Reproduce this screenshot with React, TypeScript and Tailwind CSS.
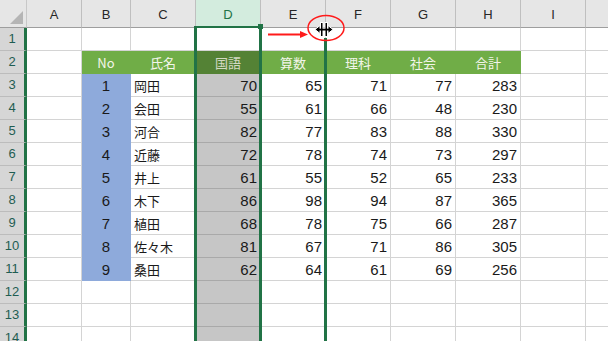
import React from "react";

const COLS = ["A", "B", "C", "D", "E", "F", "G", "H", "I", "J"];
const HEAD = ["No", "氏名", "国語", "算数", "理科", "社会", "合計"];
const DATA: [number, string, number, number, number, number, number][] = [
  [1, "岡田", 70, 65, 71, 77, 283],
  [2, "会田", 55, 61, 66, 48, 230],
  [3, "河合", 82, 77, 83, 88, 330],
  [4, "近藤", 72, 78, 74, 73, 297],
  [5, "井上", 61, 55, 52, 65, 233],
  [6, "木下", 86, 98, 94, 87, 365],
  [7, "植田", 68, 78, 75, 66, 287],
  [8, "佐々木", 81, 67, 71, 86, 305],
  [9, "桑田", 62, 64, 61, 69, 256],
];

const base = "flex items-center border-r border-b overflow-hidden whitespace-nowrap";
const white = `${base} bg-white border-[#d4d4d4]`;
const num = "font-['Liberation_Sans_Narrow','Liberation_Sans',sans-serif] text-[15px] text-[#1a1a1a] leading-none";
const jp = "font-['Noto_Sans_CJK_JP',sans-serif] text-[13px] leading-none";

function Cell({ r, c }: { r: number; c: number }) {
  // c: 0 = A ... 9 = J
  if (r === 2) {
    if (c >= 1 && c <= 7) {
      const t = HEAD[c - 1];
      if (c === 3)
        return (
          <div className={`${base} justify-center bg-[#548235] border-[#548235] ${jp} text-[#d4d9c4]`}>{t}</div>
        );
      return (
        <div className={`${base} justify-center bg-[#70ad47] border-[#70ad47] ${jp} text-[#f3f5ea]`}>{t}</div>
      );
    }
    return <div className={white} />;
  }
  if (r >= 3 && r <= 11) {
    const d = DATA[r - 3];
    if (c === 1)
      return (
        <div className={`${base} justify-center bg-[#8eaadb] border-[#8eaadb] ${num}`}>{d[0]}</div>
      );
    if (c === 2)
      return <div className={`${white} pl-[3px] ${jp} text-[#1a1a1a]`}>{d[1]}</div>;
    if (c === 3)
      return (
        <div className={`${base} justify-end pr-[3px] bg-[#c6c6c6] border-[#a9a9a9] ${num}`}>{d[2]}</div>
      );
    if (c >= 4 && c <= 7)
      return <div className={`${white} justify-end pr-[3px] ${num}`}>{d[c - 1]}</div>;
    return <div className={white} />;
  }
  if (r >= 12 && c === 3) return <div className={`${base} bg-[#c6c6c6] border-[#a9a9a9]`} />;
  return <div className={white} />;
}

export default function App() {
  const rows = Array.from({ length: 14 }, (_, i) => i + 1);
  return (
    <div className="relative w-[608px] h-[341px] overflow-hidden bg-white">
      <div className="grid grid-cols-[27px_55px_49px_65px_65px_65px_65px_65px_65px_65px_65px] grid-rows-[28px_repeat(14,23px)]">
        {/* corner */}
        <div className="relative bg-[#e6e6e6] border-r border-b border-r-[#c8c8c8] border-b-[#9e9e9e]">
          <div className="absolute right-[3px] bottom-[3px] w-0 h-0 border-l-[13px] border-l-transparent border-b-[13px] border-b-[#b5b5b5]" />
        </div>
        {COLS.map((l) =>
          l === "D" ? (
            <div
              key={l}
              className="flex items-center justify-center pt-[3px] bg-[#d3ecde] border-r border-b border-r-[#bfbfbf] border-b-[#9e9e9e] font-['Liberation_Sans',sans-serif] text-[13px] text-[#217346]"
            >
              {l}
            </div>
          ) : (
            <div
              key={l}
              className="flex items-center justify-center pt-[3px] bg-[#e6e6e6] border-r border-b border-r-[#bfbfbf] border-b-[#9e9e9e] font-['Liberation_Sans',sans-serif] text-[13px] text-[#262626]"
            >
              {l}
            </div>
          )
        )}
        {rows.map((r) => (
          <React.Fragment key={r}>
            <div className="flex items-center justify-center bg-[#d6d6d6] border-b border-b-[#bcbcbc] border-r-[3px] border-r-[#217346] font-['Liberation_Sans',sans-serif] text-[13px] text-[#1f5d52]">
              {r}
            </div>
            {COLS.map((_, c) => (
              <Cell key={c} r={r} c={c} />
            ))}
          </React.Fragment>
        ))}
      </div>

      {/* selection around column D */}
      <div className="pointer-events-none absolute left-[194px] top-[26px] w-[68px] h-[330px] border-l-[3px] border-r-[3px] border-t-2 border-[#217346]" />
      <div className="pointer-events-none absolute left-[258px] top-[24px] w-[5px] h-[5px] bg-[#217346]" />
      {/* drag guide line */}
      <div className="pointer-events-none absolute left-[324px] top-[38px] w-[3px] bottom-0 bg-[#217346]" />

      {/* annotation: arrow, ellipse, resize cursor */}
      <svg className="pointer-events-none absolute left-0 top-0" width="608" height="341" viewBox="0 0 608 341">
        <line x1="268" y1="34.5" x2="302" y2="34.5" stroke="#ff1a1a" strokeWidth="2" />
        <polygon points="300,31 308,34.5 300,38" fill="#ff1a1a" />
        <ellipse cx="326" cy="28" rx="18" ry="12.5" fill="none" stroke="#ff1a1a" strokeWidth="1.5" />
        <g stroke="#ffffff" strokeWidth="1">
          <rect x="320.5" y="22.5" width="2.5" height="14" fill="#000" />
          <rect x="325" y="22.5" width="2.5" height="14" fill="#000" />
          <polygon points="315,29.5 320,25.5 320,33.5" fill="#000" />
          <polygon points="333,29.5 328,25.5 328,33.5" fill="#000" />
        </g>
        <rect x="318" y="28.7" width="12" height="1.8" fill="#000" />
      </svg>
    </div>
  );
}
